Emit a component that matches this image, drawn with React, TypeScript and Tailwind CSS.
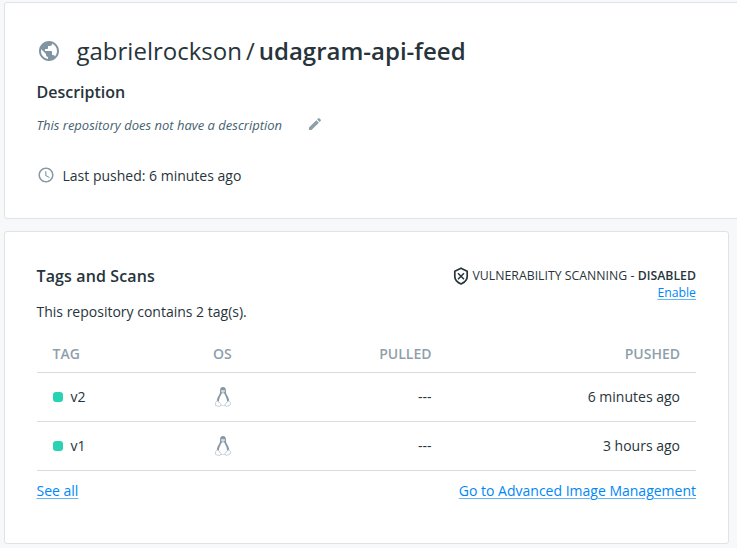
import React from "react";

type IconProps = { className?: string };

function GlobeIcon({ className }: IconProps) {
  return (
    <svg viewBox="0 0 24 24" fill="currentColor" className={className}>
      <path d="M12 2C6.48 2 2 6.48 2 12s4.48 10 10 10 10-4.48 10-10S17.52 2 12 2zm-1 17.93c-3.95-.49-7-3.85-7-7.93 0-.62.08-1.21.21-1.79L9 15v1c0 1.1.9 2 2 2v1.93zm6.9-2.54c-.26-.81-1-1.39-1.9-1.39h-1v-3c0-.55-.45-1-1-1H8v-2h2c.55 0 1-.45 1-1V7h2c1.1 0 2-.9 2-2v-.41c2.93 1.19 5 4.06 5 7.41 0 2.08-.8 3.97-2.1 5.39z" />
    </svg>
  );
}

function PencilIcon({ className }: IconProps) {
  return (
    <svg viewBox="0 0 24 24" fill="currentColor" className={className}>
      <path d="M3 17.25V21h3.75L17.81 9.94l-3.75-3.75L3 17.25zM20.71 7.04c.39-.39.39-1.02 0-1.41l-2.34-2.34a.996.996 0 0 0-1.41 0l-1.83 1.83 3.75 3.75 1.83-1.83z" />
    </svg>
  );
}

function ClockIcon({ className }: IconProps) {
  return (
    <svg viewBox="0 0 24 24" fill="currentColor" className={className}>
      <path d="M11.99 2C6.47 2 2 6.48 2 12s4.47 10 9.99 10C17.52 22 22 17.52 22 12S17.52 2 11.99 2zM12 20c-4.42 0-8-3.58-8-8s3.58-8 8-8 8 3.58 8 8-3.58 8-8 8zm.5-13H11v6l5.25 3.15.75-1.23-4.5-2.67z" />
    </svg>
  );
}

function ShieldIcon({ className }: IconProps) {
  return (
    <svg viewBox="0 0 16 18" fill="none" stroke="currentColor" className={className}>
      <path d="M8 1.200L14.200 4.200V9.500C14.200 12.900 11.600 15.400 8 17C4.400 15.400 1.800 12.900 1.800 9.500V4.200z" strokeWidth="1.700" strokeLinejoin="round" />
      <path d="M5 6.200l6 6M11 6.200l-6 6" strokeWidth="1.500" />
    </svg>
  );
}

function LinuxIcon({ className }: IconProps) {
  return (
    <svg viewBox="0 0 16 20" className={className}>
      <path d="M8 0C5.900 0 5.100 1.300 5.100 3.200c0 2.300-.2 3.600-1.300 5.400C2.700 10.400 1.800 12.200 1.800 14.500l2.500 4h7.400l2.500-4c0-2.300-.9-4.100-2-5.900-1.100-1.800-1.300-3.100-1.300-5.400C10.900 1.300 10.100 0 8 0z" fill="#8598a3" />
      <path d="M8 6.200c-.8 0-1.500.4-1.900 1.500C5.300 9.900 3.900 11.600 3.900 14.300c0 2.700 1.700 4.300 4.100 4.300s4.100-1.600 4.100-4.300c0-2.700-1.400-4.400-2.200-6.600C9.500 6.600 8.800 6.200 8 6.200z" fill="#fff" />
      <path d="M6 3.600l1.200-.8.8.6.8-.6 1.200.8-.3 1.300L8 5.900l-1.700-1z" fill="#d5dde1" />
      <path d="M.5 15.500l1.800-1.500 1.800 1 1.900 2.700-1.100 1.900-4.300-1z" fill="#fff" stroke="#bdc8ce" strokeWidth=".8" strokeLinejoin="round" />
      <path d="M15.500 15.500L13.700 14l-1.800 1-1.900 2.700 1.100 1.900 4.300-1.800z" fill="#fff" stroke="#bdc8ce" strokeWidth=".8" strokeLinejoin="round" />
    </svg>
  );
}

const tags = [
  { name: "v2", pushed: "6 minutes ago" },
  { name: "v1", pushed: "3 hours ago" },
];

const link = "text-[#0087f7] underline decoration-1 underline-offset-2 decoration-[#66b7fa]";

export default function App() {
  return (
    <div className="h-[548px] w-[737px] overflow-hidden bg-[#f7f8fa] pt-0.5 pl-1 font-['Open_Sans',sans-serif] text-sm text-[#27343b]">
      <section className="h-[217px] w-[740px] rounded-[3px] border border-[#dfe2e6] bg-white px-[31.5px]">
        <header className="flex h-[72px] items-end gap-4">
          <GlobeIcon className="mb-3 size-6 text-[#8095a1]" />
          <h1 className="flex h-12 items-center gap-1 text-2xl leading-8">
            <span>gabrielrockson</span>
            <span>/</span>
            <span className="font-semibold">udagram-api-feed</span>
          </h1>
        </header>
        <h2 className="mt-[5px] text-base leading-6 font-semibold">Description</h2>
        <div className="mt-[11px] flex h-5 items-center gap-[25px]">
          <em className="text-[13px] leading-5 text-[#46616f]">This repository does not have a description</em>
          <PencilIcon className="mb-[3px] size-4 text-[#8f9faa]" />
        </div>
        <div className="mt-[31px] flex h-5 items-center gap-2">
          <ClockIcon className="mb-0.5 size-[18px] text-[#8599a4]" />
          <span>Last pushed: 6 minutes ago</span>
        </div>
      </section>

      <section className="mt-3 h-[313px] w-[725px] rounded-[3px] border border-[#dfe2e6] bg-white pt-8 pr-8 pl-[31.5px]">
        <div className="flex h-10 justify-between">
          <h2 className="text-base leading-6 font-semibold tracking-[0.12px]">Tags and Scans</h2>
          <div className="flex flex-col items-end pt-[2px] text-[12.25px] leading-[17px]">
            <div className="flex h-[18px] items-center gap-1">
              <ShieldIcon className="mt-px h-[18px] w-4" />
              <span className="tracking-[0.03px]">VULNERABILITY SCANNING - <b className="font-semibold">DISABLED</b></span>
            </div>
            <a className={link}>Enable</a>
          </div>
        </div>
        <p className="mt-[-2px] leading-5">This repository contains 2 tag(s).</p>
        <table className="mt-3 w-full table-fixed border-collapse">
          <colgroup>
            <col className="w-[160px]" />
            <col className="w-[110px]" />
            <col className="w-[141px]" />
            <col />
          </colgroup>
          <thead>
            <tr className="h-[38px] border-b border-[#d9dcdf] text-[#8f9faa]">
              <th className="px-4 pt-0.5 text-left font-semibold">TAG</th>
              <th className="pt-0.5 pr-4 pl-[16.5px] text-left font-semibold">OS</th>
              <th className="px-4 pt-0.5 text-right font-semibold">PULLED</th>
              <th className="px-4 pt-0.5 text-right font-semibold">PUSHED</th>
            </tr>
          </thead>
          <tbody>
            {tags.map((tag) => (
              <tr key={tag.name} className="h-[49px] border-b border-[#d9dcdf]">
                <td className="px-4">
                  <div className="flex items-center gap-2">
                    <span className="size-2.5 rounded-[3px] bg-[#27d3b2]" />
                    {tag.name}
                  </div>
                </td>
                <td className="px-[18px]"><LinuxIcon className="h-5 w-4" /></td>
                <td className="px-4 text-right">---</td>
                <td className="px-4 text-right">{tag.pushed}</td>
              </tr>
            ))}
          </tbody>
        </table>
        <div className="mt-2.5 flex justify-between leading-5">
          <a className={link}>See all</a>
          <a className={link}>Go to Advanced Image Management</a>
        </div>
      </section>
    </div>
  );
}
